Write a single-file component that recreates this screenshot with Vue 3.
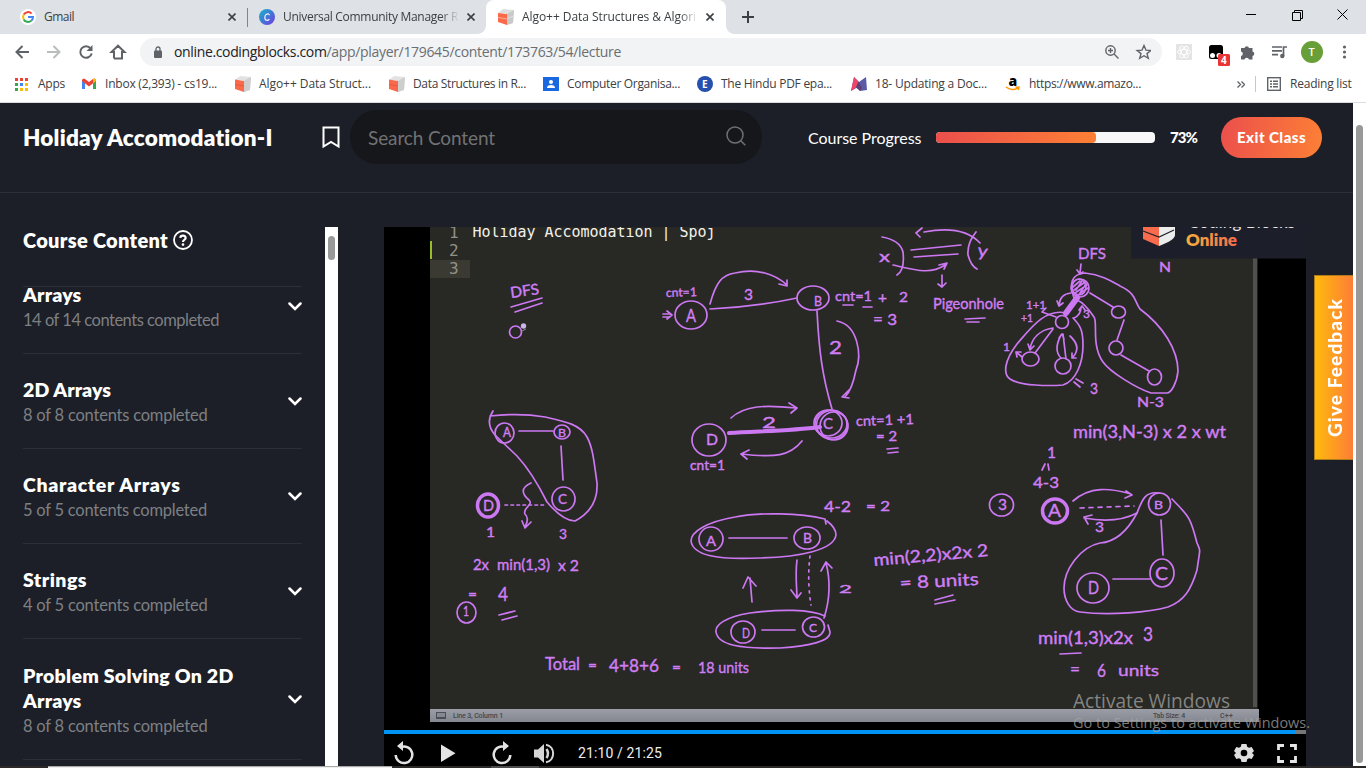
<script setup>
// Stretches or tightens letter spacing so a label fills its intended length.
const vFit = {
  mounted(el, { value, modifiers }) {
    const range = document.createRange()
    range.selectNodeContents(el)
    const box = range.getBoundingClientRect()
    const length = modifiers.vertical ? box.height : box.width
    el.style.letterSpacing = (value - length) / el.textContent.length + 'px'
  },
}

const bookmarks = [
  { icon: 'apps', text: 'Apps', w: 27 },
  { icon: 'gmail', text: 'Inbox (2,393) - cs19...', w: 112 },
  { icon: 'blocks', text: 'Algo++ Data Struct...', w: 112 },
  { icon: 'blocks', text: 'Data Structures in R...', w: 113 },
  { icon: 'people', text: 'Computer Organisa...', w: 113 },
  { icon: 'e', text: 'The Hindu PDF epa...', w: 111 },
  { icon: 'm', text: '18- Updating a Doc...', w: 112 },
  { icon: 'amazon', text: 'https://www.amazo...', w: 112 },
]

const sections = [
  { lines: [['Arrays', 58.5]], sub: '14 of 14 contents completed', w: 196 },
  { lines: [['2D Arrays', 88]], sub: '8 of 8 contents completed', w: 184.5 },
  { lines: [['Character Arrays', 157.5]], sub: '5 of 5 contents completed', w: 184 },
  { lines: [['Strings', 64]], sub: '4 of 5 contents completed', w: 184.5 },
  { lines: [['Problem Solving On 2D', 210.5], ['Arrays', 58.5]], sub: '8 of 8 contents completed', w: 184.5 },
]

// Whiteboard captions: [x, baseline, width, font size, text, rotation]
const notes = [
  [511, 298, 29, 15, 'DFS', -8],
  [666, 297, 31, 12, 'cnt=1', -2],
  [686, 322, 10, 17, 'A'],
  [744, 300, 9, 16, '3'],
  [814, 306, 8, 14, 'B'],
  [829, 354, 13, 18, '2'],
  [835, 301, 37, 14, 'cnt=1'],
  [878, 303, 9, 15, '+'],
  [899, 302, 9, 14, '2'],
  [873, 325, 24, 15, '= 3'],
  [933, 309, 71, 16, 'Pigeonhole'],
  [879, 262, 11, 15, 'x'],
  [977, 256, 10, 17, 'y', 8],
  [856, 426, 58, 14, 'cnt=1 +1', -2],
  [876, 441, 21, 13, '= 2'],
  [706, 445, 12, 16, 'D'],
  [690, 470, 35, 13, 'cnt=1'],
  [762, 428, 14, 15, '2'],
  [823, 429, 10, 15, 'C'],
  [503, 437, 8, 13, 'A'],
  [558, 437, 8, 12, 'B'],
  [558, 504, 9, 13, 'C'],
  [483, 511, 11, 15, 'D'],
  [486, 537, 9, 14, '1'],
  [559, 539, 8, 13, '3'],
  [473, 570, 16, 15, '2x'],
  [497, 570, 53, 15, 'min(1,3)'],
  [558, 571, 21, 15, 'x 2'],
  [468, 599, 9, 14, '='],
  [498, 601, 10, 20, '4'],
  [463, 616, 6, 13, '1'],
  [545, 670, 35, 17, 'Total'],
  [588, 670, 9, 14, '='],
  [609, 672, 50, 17, '4+8+6'],
  [672, 672, 9, 14, '='],
  [698, 673, 51, 16, '18 units'],
  [706, 546, 10, 14, 'A'],
  [803, 543, 9, 14, 'B'],
  [824, 512, 27, 15, '4-2'],
  [866, 511, 24, 13, '= 2'],
  [874, 566, 115, 17, 'min(2,2)x2x 2', -5],
  [900, 589, 79, 17, '= 8 units', -3],
  [839, 593, 13, 12, '2'],
  [742, 638, 8, 13, 'D'],
  [809, 632, 8, 12, 'C'],
  [998, 510, 9, 15, '3'],
  [1048, 517, 13, 17, 'A'],
  [1095, 532, 9, 13, '3'],
  [1154, 509, 9, 12, 'B'],
  [1155, 580, 13, 18, 'C'],
  [1088, 594, 11, 18, 'D'],
  [1047, 458, 9, 16, '1'],
  [1033, 488, 26, 15, '4-3'],
  [1038, 644, 95, 17, 'min(1,3)x2x'],
  [1143, 641, 10, 20, '3'],
  [1070, 675, 10, 15, '='],
  [1097, 677, 9, 18, '6'],
  [1118, 676, 41, 16, 'units'],
  [1078, 259, 28, 15, 'DFS'],
  [1159, 272, 12, 13, 'N'],
  [1026, 309, 20, 12, '1+1'],
  [1021, 322, 12, 12, '+1'],
  [1003, 351, 7, 12, '1'],
  [1083, 318, 7, 11, '3'],
  [1090, 394, 8, 15, '3'],
  [1137, 407, 27, 13, 'N-3'],
  [1073, 438, 153, 17, 'min(3,N-3) x 2 x wt'],
]

const strokes = [
  'M511 307L542 298M515 312L542 303',
  'M710 304C716 282 722 275 735 273C757 268 775 274 787 285M779 284L787 286L787 280',
  'M710 309Q755 307 797 298M817 311C819 350 822 375 832 409',
  'M837 321C858 325 862 355 856 370C853 385 850 392 845 397M849 390L842 397L849 398',
  'M663 314H669M663 317H669M667 311L672 315L667 319',
  'M843 305H853M863 307H872M965 319L985 318M967 322L979 322',
  'M942 275V287M938 284L942 287L946 283',
  'M882 237Q900 240 903 252Q905 270 897 275',
  'M893 265C915 270 930 275 945 265M939 265L947 263L944 269',
  'M924 232C950 227 968 230 980 243M922 228L916 233L920 237',
  'M911 250L961 245M914 257L958 254M976 232Q967 243 968 255Q971 266 977 269',
  'M887 449L898 448M888 453L898 452',
  'M731 418C745 405 765 405 796 408M789 403L797 408L791 413',
  'M802 441C790 456 775 458 742 454M749 450L741 454L747 459',
  'M519 431H553M561 446L563 480',
  'M493 411C487 420 489 428 495 435L517 456C530 470 538 484 547 502C558 515 567 521 575 521C590 513 598 500 597 483C594 462 593 448 587 437C580 424 563 421 545 417C528 414 508 414 490 416',
  'M531 483C520 488 522 494 529 500C534 505 522 508 525 514C530 519 526 525 525 527M522 521L525 528L531 522',
  'M499 615L515 611M502 620L517 616',
  'M826 524L825 519C800 513 760 512 735 517C706 522 691 532 691 541C693 555 715 560 760 558C800 557 834 550 836 535C836 528 831 524 827 521',
  'M729 538H787M762 630H795',
  'M752 602L750 578M743 588L748 577L756 586',
  'M797 560C795 575 797 590 797 598M791 590L797 598L801 593',
  'M824 618Q833 590 826 563M821 571L826 562L832 568',
  'M825 616C810 609 780 609 750 613C725 617 715 625 716 632C718 645 740 649 780 648C810 646 831 641 830 632L828 625',
  'M935 600L953 595M935 604L955 600',
  'M1073 501C1090 486 1110 488 1131 494M1126 491L1132 495L1125 498',
  'M1137 513C1120 522 1100 521 1084 518M1092 515L1084 517L1088 524',
  'M1161 520L1163 555M1113 579H1150M1060 654L1081 653',
  'M1159 493C1145 491 1142 500 1137 513C1127 532 1115 542 1100 543C1080 547 1064 570 1064 588C1064 600 1070 611 1080 612C1110 616 1150 612 1168 607C1184 601 1191 590 1197 570C1200 548 1201 552 1197 543C1190 515 1188 516 1172 499',
  'M1045 464L1042 470M1048 464L1049 470',
  'M1081 264L1080 273M1077 270L1080 274L1083 272',
  'M1066 313C1045 308 1030 329 1017 344C1004 361 1003 374 1010 379C1020 386 1050 386 1063 385C1076 381 1083 363 1083 345C1083 330 1080 325 1073 318',
  'M1053 328C1040 330 1032 338 1030 349M1028 344L1030 350L1034 346M1053 329L1035 353',
  'M1063 334L1066 359M1061 335Q1053 350 1061 358M1070 336Q1082 347 1073 357M1059 338L1062 334L1064 339M1076 358L1072 358L1072 353',
  'M1022 357L1016 352M1017 357L1016 352L1021 352M1071 293Q1060 294 1059 305M1057 301L1059 306L1063 303M1074 318Q1081 315 1081 307M1079 310L1082 306L1085 310',
  'M1042 312L1056 317M1042 312L1046 308M1074 382L1080 387M1076 379L1083 383',
  'M1074 298C1069 284 1071 274 1085 273C1103 275 1113 282 1120 286C1137 294 1134 301 1140 309C1163 326 1178 350 1178 371C1177 383 1171 393 1167 393L1151 393C1136 388 1110 372 1103 362C1091 345 1098 322 1094 317C1088 308 1082 302 1077 300',
  'M1090 293L1113 307M1124 320L1117 340M1121 355L1149 371',
  'M1073 287L1080 281M1074 290L1085 282M1075 293L1087 285M1078 295L1088 288M1082 281L1076 290M1086 284L1080 293',
]

const rings = [
  [515.5, 332, 6, 6], [691, 315, 16, 14], [813, 298, 16, 12], [709, 440, 17, 16],
  [831, 424, 16, 14], [834, 426, 14, 14], [828, 423, 14, 13], [832, 425, 15.5, 14.5],
  [504.5, 433, 9.5, 10], [562, 432, 8, 7], [563.5, 499, 11.5, 12], [466.5, 612.5, 9.5, 10.5],
  [711, 539, 12, 12], [807, 538, 13, 11], [743, 632, 12, 11], [813.5, 627, 11, 10],
  [1001.5, 505, 12, 11], [1159.5, 504, 11, 11], [1162, 573, 12, 14], [1093, 588, 16, 15],
  [1080, 288, 9, 9], [1079, 287, 7, 8], [1062, 322, 6.5, 6.5], [1030.5, 359, 8.5, 7], [1063, 366, 8, 8],
  [1118.5, 312, 7, 6], [1116, 348, 7, 7], [1154.5, 377, 7, 8],
]
</script>

<template>
  <div class="window">
    <div class="tabs">
      <div class="tab first">
        <svg class="fav" viewBox="0 0 16 16"><circle cx="8" cy="8" r="8" fill="#fff" /><g fill="none" stroke-width="2"><path d="M11.6 4.6A5 5 0 0 0 3.7 5.6" stroke="#ea4335" /><path d="M3.7 5.6A5 5 0 0 0 3.7 10.4" stroke="#fbbc05" /><path d="M3.7 10.4A5 5 0 0 0 11.2 11.8" stroke="#34a853" /><path d="M11.2 11.8A5 5 0 0 0 13 8H8" stroke="#4285f4" /></g></svg>
        <span v-fit="30" class="tab-text">Gmail</span>
        <svg class="close" viewBox="0 0 8 8"><path d="M.5.5L7.5 7.5M7.5.5L.5 7.5" /></svg>
      </div>
      <div class="tab second">
        <svg class="fav" viewBox="0 0 16 16"><defs><linearGradient id="cv" x1="0" y1="0" x2="1" y2="1"><stop stop-color="#12b7cb" /><stop offset="1" stop-color="#7338e0" /></linearGradient></defs><circle cx="8" cy="8" r="8" fill="url(#cv)" /><path d="M10.3 6.2C10 4 6 4.4 5.8 8.3C5.7 12 9.3 12 10.4 10" fill="none" stroke="#fff" stroke-width="1.1" /></svg>
        <span class="tab-text clipped"><span v-fit="175">Universal Community Manager R</span></span>
        <svg class="close" viewBox="0 0 8 8"><path d="M.5.5L7.5 7.5M7.5.5L.5 7.5" /></svg>
      </div>
      <div class="tab active">
        <svg class="fav" viewBox="0 0 16 16"><path d="M0 4L5 0L16 1L15 14L8 16V4Z" fill="#dedede" /><path d="M0 4L9 5V16L0 13Z" fill="#f9694a" /><path d="M9 5L16 1L15 14L9 16Z" fill="#c9c9c9" /><path d="M9 9.5L15.5 7M0 8.5L9 10" stroke="#f5f5f5" stroke-width=".5" /></svg>
        <span class="tab-text clipped"><span v-fit="174">Algo++ Data Structures &amp; Algori</span></span>
        <svg class="close" viewBox="0 0 8 8"><path d="M.5.5L7.5 7.5M7.5.5L.5 7.5" /></svg>
      </div>
      <svg class="plus" viewBox="0 0 12 12"><path d="M6 0V12M0 6H12" stroke="#3c4043" stroke-width="2" /></svg>
      <svg class="winbtns" viewBox="0 0 104 12" fill="none" stroke="#000"><path d="M1 5.5H11M47.5 3.5H55.500V11.500H47.500V3.500ZM49.500 3V1.500H57.500V9.500H56M92.500 .500L102.500 10.500M102.500 .500L92.500 10.500" /></svg>
    </div>

    <div class="toolbar">
      <svg class="nav" viewBox="0 0 116 16" fill="none" stroke-width="2"><path d="M14 8H1.5M7.5 2L1.5 8L7.5 14" stroke="#5f6368" /><path d="M32 8H44.5M38.5 2L44.5 8L38.5 14" stroke="#babcbe" /><path d="M75.6 4.3A5.8 5.8 0 1 0 76.7 9.5" stroke="#5f6368" /><path d="M77.5 1V7H71.5Z" fill="#5f6368" /><path d="M99 14.5H106.7M99 14.5V8H96.5L103 1.7L109.5 8H107V14.5H99" stroke="#5f6368" /></svg>
      <div class="omni">
        <svg class="lock" viewBox="0 0 8 12"><path d="M2 5V3A2 2 0 0 1 6 3V5" fill="none" stroke="#5f6368" stroke-width="1.3" /><rect y="4.5" width="8" height="7.5" rx="1" fill="#5f6368" /></svg>
        <span v-fit="152.5" class="host">online.codingblocks.com</span><span v-fit="294.5" class="path">/app/player/179645/content/173763/54/lecture</span>
        <svg class="omni-icons" viewBox="0 0 46 16" fill="none" stroke="#5f6368" stroke-width="1.4"><circle cx="5.500" cy="6.500" r="4.700" /><path d="M9 10L13.500 14.500M5.500 4V9M3 6.500H8" /><path d="M39 1.500L41 6.200L45.800 6.500L42 9.600L43.300 14.300L39 11.700L34.700 14.300L36 9.600L32.200 6.500L37 6.200Z" /></svg>
      </div>
      <svg class="ext" viewBox="0 0 190 28">
        <rect x="4" y="6" width="16" height="16" fill="#e4e4e4" /><g fill="none" stroke="#fff" stroke-width=".9"><ellipse cx="12" cy="14" rx="6.5" ry="2.5" /><ellipse cx="12" cy="14" rx="6.5" ry="2.5" transform="rotate(60 12 14)" /><ellipse cx="12" cy="14" rx="6.5" ry="2.5" transform="rotate(120 12 14)" /></g>
        <rect x="37" y="7" width="14" height="14" rx="2.5" fill="#000" /><circle cx="40.500" cy="17.500" r="2.500" fill="#fff" /><circle cx="47" cy="17.500" r="2.500" fill="#fff" /><rect x="46" y="16" width="12" height="12" rx="1.500" fill="#eb3434" /><text x="49" y="25.800" class="badge">4</text>
        <path d="M69 10H72.500A2.300 2.300 0 0 1 77 10H80.500V13.500A2.300 2.300 0 0 1 80.500 18V21.500H77A2.300 2.300 0 0 0 72.500 21.500H69V18A2.300 2.300 0 0 0 69 13.500Z" fill="#5f6368" />
        <path d="M100 9H110M100 12.800H110M100 16.600H106M115 9H111.500V18" fill="none" stroke="#5f6368" stroke-width="1.700" /><circle cx="110.300" cy="18" r="2.200" fill="#5f6368" />
        <circle cx="140" cy="14" r="11" fill="#689f38" /><text x="136.500" y="18" class="avatar">T</text>
        <g fill="#5f6368"><circle cx="172.500" cy="9" r="1.600" /><circle cx="172.500" cy="14" r="1.600" /><circle cx="172.500" cy="19" r="1.600" /></g>
      </svg>
    </div>

    <div class="bookmarks">
      <div v-for="b in bookmarks" :key="b.text" class="bm" :class="'bm-' + b.icon">
        <svg v-if="b.icon === 'apps'" viewBox="0 0 16 16"><path d="M1 2H4V5H1ZM6 2H9V5H6ZM11 2H14V5H11Z" fill="#ea4335" /><path d="M1 7H4V10H1ZM1 12H4V15H1Z" fill="#34a853" /><path d="M6 7H9V10H6Z" fill="#4285f4" /><path d="M11 7H14V10H11ZM6 12H9V15H6ZM11 12H14V15H11Z" fill="#fbbc05" /></svg>
        <svg v-else-if="b.icon === 'gmail'" viewBox="0 0 16 16"><path d="M0 4V13H3V7Z" fill="#4285f4" /><path d="M14 4V13H11V7Z" fill="#34a853" /><path d="M0 4Q1 1.500 3 3L7 6L11 3Q13 1.500 14 4V5L7 10.500L0 5Z" fill="#ea4335" /><path d="M11 3Q14 1.500 14 5L11 7.300Z" fill="#fbbc05" /></svg>
        <svg v-else-if="b.icon === 'blocks'" viewBox="0 0 16 16"><path d="M0 4L5 0L16 1L15 14L8 16V4Z" fill="#e2e2e2" /><path d="M0 3.500L9 5V16L0 13Z" fill="#f9694a" /><path d="M9 5L16 1L15 14L9 16Z" fill="#cecece" /><path d="M0 8.500L9 10" stroke="#d54b32" stroke-width=".5" /></svg>
        <svg v-else-if="b.icon === 'people'" viewBox="0 0 16 16"><path d="M0 1H16V15H0Z" fill="#1a67e0" /><circle cx="8" cy="6" r="2" fill="#fff" /><path d="M4 12Q4 9 8 9T12 12Z" fill="#fff" /></svg>
        <svg v-else-if="b.icon === 'e'" viewBox="0 0 16 16"><circle cx="8" cy="8" r="8" fill="#264fae" /><text x="5" y="11.700" class="e-mark">E</text></svg>
        <svg v-else-if="b.icon === 'm'" viewBox="0 0 16 16"><path d="M3 1L8 6L15 1L16 14L9 15L7 11L0 15Z" fill="#5b5ba8" /><path d="M3 1L7.500 5.500L5 11.500L0 15Z" fill="#f0436a" /><path d="M7.500 5.500L11 12L9 15L5 11.500Z" fill="#5e3f74" /></svg>
        <svg v-else viewBox="0 0 16 16"><text x="3.500" y="9.500" class="a-mark">a</text><path d="M1 11Q7 15.500 13 11.800M10.500 11.200L14 11L13.300 14" fill="none" stroke="#f90" stroke-width="1.500" /></svg>
        <span v-fit="b.w">{{ b.text }}</span>
      </div>
      <svg class="chev2" viewBox="0 0 8 7" fill="none" stroke="#5f6368" stroke-width="1.4"><path d="M.5.5L3.5 3.5L.5 6.5M4.5.5L7.5 3.5L4.5 6.5" /></svg>
      <i class="bm-sep"></i>
      <svg class="list-icon" viewBox="0 0 14 14" fill="none" stroke="#5f6368"><rect x=".7" y=".7" width="12.600" height="12.600" stroke-width="1.400" /><path d="M3 4.300H5M6 4.300H11M3 7H5M6 7H11M3 9.700H5M6 9.700H11" stroke-width="1.500" /></svg>
      <span v-fit="61.5">Reading list</span>
    </div>

    <div class="page">
      <div class="main">
        <header>
          <h1><span v-fit="250">Holiday Accomodation-I</span></h1>
          <svg class="mark" viewBox="0 0 18 23"><path d="M1.500 1.500H16.500V20.500L9 16L1.500 20.500Z" fill="none" stroke="#fff" stroke-width="2" /></svg>
          <div class="search">
            <span v-fit="127">Search Content</span>
            <svg viewBox="0 0 20 20" fill="none" stroke="#6f7072" stroke-width="1.500"><circle cx="9" cy="9" r="8" /><path d="M14.500 14.500L19.300 19.300" /></svg>
          </div>
          <span v-fit="113.5" class="progress-label">Course Progress</span>
          <div class="bar"><i></i></div>
          <b v-fit="27" class="pct">73%</b>
          <button><span v-fit="69">Exit Class</span></button>
        </header>

        <div class="content">
          <aside>
            <div class="side-head">
              <span v-fit="145">Course Content</span>
              <svg viewBox="0 0 20 20"><circle cx="10" cy="10" r="9" fill="none" stroke="#fff" stroke-width="1.800" /><path d="M7.300 7.800C7.600 4.700 13 5.100 12.600 8.100C12.400 9.700 10 10 10 12" fill="none" stroke="#fff" stroke-width="2.200" /><circle cx="10" cy="14.600" r="1.300" fill="#fff" /></svg>
            </div>
            <div class="list">
              <div v-for="s in sections" :key="s.lines[0][0]" class="row">
                <div class="copy">
                  <h3 v-for="l in s.lines" :key="l[0]"><span v-fit="l[1]">{{ l[0] }}</span></h3>
                  <p><span v-fit="s.w">{{ s.sub }}</span></p>
                </div>
                <svg viewBox="0 0 14 9"><path d="M1.500 1.500L7 7L12.500 1.500" fill="none" stroke="#fff" stroke-width="2.500" stroke-linecap="round" /></svg>
              </div>
            </div>
          </aside>
          <div class="side-scroll"><i></i></div>

          <div class="video">
            <div class="screen">
              <svg class="board" viewBox="430 227 876 483">
                <rect x="430" y="227" width="829" height="483" fill="#282824" />
                <rect x="430" y="260" width="40" height="18" fill="#3b3a32" />
                <rect x="430" y="241" width="2" height="18" fill="#99bd26" />
                <rect x="1253" y="227" width="4.500" height="480" fill="#50504d" />
                <rect x="1257.500" y="227" width="2" height="483" fill="#000" />
                <g class="code">
                  <text x="449" y="237.500" class="ln">1</text><text x="449" y="256" class="ln">2</text><text x="449" y="274" class="ln">3</text>
                  <text x="472.500" y="237" textLength="243">Holiday Accomodation | Spoj</text>
                </g>
                <g class="ink">
                  <path v-for="(d, i) in strokes" :key="i" :d="d" />
                  <ellipse v-for="(r, i) in rings" :key="'r' + i" :cx="r[0]" :cy="r[1]" :rx="r[2]" :ry="r[3]" />
                  <ellipse cx="488" cy="505.500" rx="10.500" ry="11.500" stroke-width="3.500" />
                  <ellipse cx="1055" cy="511" rx="12.500" ry="12" stroke-width="3.500" />
                  <path d="M729 433C760 431 790 431 820 427" stroke-width="4" />
                  <path d="M1077 298L1066 313" stroke-width="6" />
                  <path d="M505 505H546" stroke-dasharray="2.500 3.500" />
                  <path d="M810 556Q807 580 811 605" stroke-dasharray="2 5" />
                  <path d="M1080 508L1134 506" stroke-dasharray="4 5" />
                </g>
                <circle cx="523.500" cy="326" r="2.700" fill="#c8b6e6" /><path d="M522 331L526 329" stroke="#888" />
                <g class="hand">
                  <text v-for="(n, i) in notes" :key="i" :x="n[0]" :y="n[1]" :font-size="n[3]" :textLength="n[2]" lengthAdjust="spacingAndGlyphs" :transform="n[5] ? `rotate(${n[5]} ${n[0]} ${n[1]})` : undefined">{{ n[4] }}</text>
                </g>
                <rect x="1131" y="227" width="175" height="31.500" fill="#1c1f2a" />
                <path d="M1143 227H1159V246L1143 239Z" fill="#f96b4d" /><path d="M1159 227H1175V235Q1175 240 1159 246Z" fill="#ececec" /><path d="M1143 231L1159 237L1174 230" fill="none" stroke="#22232b" stroke-width="1.200" />
                <defs><linearGradient id="on"><stop stop-color="#f6b03c" /><stop offset="1" stop-color="#f36b4f" /></linearGradient></defs>
                <text x="1188" y="227.800" textLength="107" class="brand" fill="#e8e8ea">Coding Blocks</text>
                <text x="1186" y="245.500" textLength="51" class="brand bold" fill="url(#on)">Online</text>
              </svg>
              <div class="status">
                <svg viewBox="0 0 10 7"><rect x=".5" y=".5" width="9" height="6" fill="#858891" stroke="#4c4e55" /><path d="M1 5.500H9" stroke="#4c4e55" /></svg>
                <span v-fit="50">Line 3, Column 1</span><span v-fit="32" class="tabsize">Tab Size: 4</span><span v-fit="13">C++</span>
              </div>
            </div>
            <div class="seek"><i></i></div>
            <div class="controls">
              <svg viewBox="0 0 180 28" class="left-c">
                <g fill="none" stroke="#e3e3e3" stroke-width="2.500"><path d="M17 8A8.300 8.300 0 1 1 11.700 16" /><path d="M121 8A8.300 8.300 0 1 0 126.300 16" /></g>
                <path d="M19 2V12L13 7ZM119 2V12L125 7ZM57 5.500V23L71.500 14.200Z" fill="#e3e3e3" />
                <path d="M150 10.500H154L160 5V24L154 18.500H150Z" fill="#d6d6d6" /><path d="M162.500 10Q165.500 14.500 162.500 19" fill="none" stroke="#d6d6d6" stroke-width="2.500" /><path d="M162 5.700C171.500 7.500 171.500 21.500 162 23.300" fill="none" stroke="#d6d6d6" stroke-width="2" />
              </svg>
              <span v-fit="84" class="time">21:10 / 21:25</span>
              <svg viewBox="0 0 64 20" class="right-c">
                <path d="M7.500 1H12.500L13.200 3.700L15 4.700L17.700 3.900L20 8L18 10L20 12L17.700 16.100L15 15.300L13.200 16.300L12.500 19H7.500L6.800 16.300L5 15.300L2.300 16.100L0 12L2 10L0 8L2.300 3.900L5 4.700L6.800 3.700Z" transform="translate(1)" fill="#dedede" /><circle cx="11" cy="10" r="3.300" fill="#000" />
                <path d="M45.500 7V2.500H51M57 2.500H62.500V7M62.500 13V18.500H57M51 18.500H45.500V13" fill="none" stroke="#e5e5e5" stroke-width="2.800" />
              </svg>
            </div>
          </div>
          <div class="feedback"><span v-fit.vertical="139">Give Feedback</span></div>
        </div>
      </div>
      <div class="page-scroll"><i></i></div>
    </div>
    <div class="bottom-edge"><i></i><b></b></div>

    <svg class="watermark" viewBox="0 0 240 44">
      <text x="0" y="19.500" font-size="20" textLength="157" lengthAdjust="spacingAndGlyphs">Activate Windows</text>
      <text x="0" y="40" font-size="15" textLength="237" lengthAdjust="spacingAndGlyphs">Go to Settings to activate Windows.</text>
    </svg>
  </div>
</template>

<style>
html, body { margin: 0; overflow: hidden; background: #fff; }
</style>

<style scoped>
* { box-sizing: border-box; }
svg { display: block; flex: none; }
span, b { white-space: nowrap; }
.window { position: relative; width: 1366px; height: 768px; overflow: hidden; display: flex; flex-direction: column; font-family: "Open Sans", "Noto Sans", sans-serif; font-size: 12px; color: #3c4043; }

.tabs { height: 34px; flex: none; display: flex; background: #dee1e6; }
.tab { display: flex; align-items: center; height: 34px; }
.tab.first { width: 248px; padding-left: 20px; background: linear-gradient(#80868b, #80868b) right 8px / 1px 19px no-repeat; }
.tab.second { width: 238px; padding-left: 11px; }
.tab.active { position: relative; width: 240px; padding-left: 12px; background: #fff; border-radius: 8px 8px 0 0; }
.tab.active::before, .tab.active::after { content: ""; position: absolute; bottom: 0; width: 8px; height: 8px; }
.tab.active::before { left: -8px; background: radial-gradient(circle at 0 0, transparent 7.5px, #fff 8px); }
.tab.active::after { right: -8px; background: radial-gradient(circle at 100% 0, transparent 7.5px, #fff 8px); }
.fav { width: 16px; height: 16px; margin-right: 8px; }
.tab-text { flex: none; margin-top: -1px; }
.clipped { width: 176px; overflow: hidden; -webkit-mask-image: linear-gradient(90deg, #000 158px, transparent 176px); }
.close { width: 8px; height: 8px; margin-left: 8px; fill: none; stroke: #3c4043; stroke-width: 1.6; }
.first .close { margin-left: auto; margin-right: 12px; }
.plus { width: 12px; height: 12px; margin: 11px 0 0 16px; }
.winbtns { width: 104px; height: 12px; margin: 9px 17px 0 auto; }

.toolbar { height: 33px; flex: none; display: flex; padding-top: 4px; }
.nav { width: 116px; height: 16px; margin: 6px 9px 0 15px; }
.omni { width: 1022px; height: 28px; border-radius: 14px; background: #f1f3f4; display: flex; align-items: center; font-size: 14px; }
.omni span { margin-top: -2px; }
.lock { width: 8px; height: 12px; margin: 0 12px 0 14px; }
.host { color: #202124; }
.path { color: #6a6e73; }
.omni-icons { width: 46px; height: 16px; margin: 0 11px 0 auto; }
.ext { width: 190px; height: 28px; margin-left: 10px; }
.badge { font: bold 10px "Open Sans", sans-serif; fill: #fff; }
.avatar { font: 600 11px "Open Sans", sans-serif; fill: #fff; }

.bookmarks { height: 36px; flex: none; display: flex; align-items: center; padding: 0 0 1px 14px; border-bottom: 1px solid #dadce0; font-size: 12px; }
.bookmarks span { margin-top: -1px; }
.bm { width: 154px; flex: none; display: flex; align-items: center; }
.bm svg { width: 16px; height: 16px; margin-right: 8px; }
.bm-apps { width: 68px; }
.bm-gmail { width: 153px; }
.bm-gmail svg { margin-right: 7px; }
.e-mark { font: bold 10px "Open Sans", sans-serif; fill: #fff; }
.a-mark { font: 900 14px "Open Sans", sans-serif; fill: #000; }
.chev2 { width: 8px; height: 7px; margin-left: 78px; }
.bm-sep { width: 1px; height: 16px; margin: 0 11px 0 10px; background: #c6c9cc; }
.list-icon { width: 14px; height: 14px; margin-right: 9px; }

.page { flex: 1; min-height: 0; display: flex; background: #1c1f27; font-family: Lato, sans-serif; color: #fff; }
.main { width: 1353px; display: flex; flex-direction: column; }
.page-scroll { width: 13px; background: #fff; padding: 22px 0 0 3px; }
.page-scroll i { display: block; width: 7px; height: 638px; border-radius: 4px; background: #999; }
header { height: 90px; flex: none; display: flex; align-items: center; padding: 0 31px 21px 23px; border-bottom: 1px solid #2c2f37; }
h1 { margin: 2px 0 0; width: 299px; font-size: 22.5px; font-weight: 800; line-height: 30px; }
.mark { width: 18px; height: 23px; margin-right: 10px; }
.search { width: 412px; height: 54px; border-radius: 27px; background: #16171b; display: flex; align-items: center; justify-content: space-between; padding: 0 16px 0 18px; font-size: 19px; color: #717274; }
.search svg { width: 20px; height: 20px; margin-top: -2px; }
.progress-label { width: 114px; margin-left: 46px; font-size: 16px; }
.bar { width: 219px; height: 11px; margin-left: 14px; border-radius: 4px; background: #f8f8f8; }
.bar i { display: block; width: 73%; height: 11px; border-radius: 4px; background: linear-gradient(90deg, #eb4f4c, #fd8035); }
.pct { width: 27px; margin-left: 15px; font-size: 15px; font-weight: 900; }
button { width: 101px; height: 41px; margin-left: 24px; padding: 0; border: 0; border-radius: 21px; background: linear-gradient(100deg, #eb4f4c, #fd8035); color: #fff; font: 900 15px Lato, sans-serif; }

.content { flex: 1; min-height: 0; display: flex; padding-top: 34px; }
aside { width: 325px; padding: 0 23px; overflow: hidden; }
.side-head { height: 60px; display: flex; padding-top: 1px; border-bottom: 1px solid #2c2f37; font-size: 20px; font-weight: 800; line-height: 24px; width: 279px; }
.side-head svg { width: 20px; height: 20px; margin: 2px 0 0 5px; }
.list { margin-top: -3px; width: 279px; }
.row { display: flex; align-items: center; justify-content: space-between; padding: 25px 0 20px; border-bottom: 1px solid #2c2f37; }
.row:first-child { padding-top: 0; }
.row:last-child { padding-top: 26px; }
.row svg { width: 14px; height: 9px; margin-top: -5px; }
.copy { margin: -2px 0 2px; }
h3 { margin: 0; font-size: 19.5px; font-weight: 800; line-height: 25px; }
p { margin: 0; font-size: 16.5px; line-height: 24px; color: #7e8083; }
p span { position: relative; top: 1px; }
.side-scroll { width: 13px; background: #fff; padding: 9px 3px; }
.side-scroll i { display: block; width: 7px; height: 24px; border-radius: 4px; background: #999; }
.video { width: 922px; margin-left: 46px; background: #000; display: flex; flex-direction: column; }
.screen { height: 503px; flex: none; padding-left: 46px; }
.board { width: 876px; height: 483px; }
.status { position: relative; width: 829px; height: 13px; margin-top: -1px; padding: 0 26px 0 6px; display: flex; align-items: center; background: linear-gradient(#9a9da6, #858891); color: #45474e; font-family: Roboto, sans-serif; font-size: 7px; font-weight: 500; }
.status svg { width: 10px; height: 7px; margin-right: 7px; }
.tabsize { margin: 0 35px 0 auto; }
.code { font: 15px "DejaVu Sans Mono", monospace; fill: #f1f1ec; }
.ln { font-size: 16px; fill: #92928a; }
.ink { fill: none; stroke: #cb78f2; stroke-width: 1.7; stroke-linecap: round; stroke-linejoin: round; }
.hand { font-family: Lato, sans-serif; fill: #cf7ef5; stroke: #cf7ef5; stroke-width: .4; }
.brand { font: 400 17px Lato, sans-serif; }
.brand.bold { font-weight: 800; }
.seek { height: 4px; flex: none; background: #777; }
.seek i { display: block; width: 911px; height: 4px; background: #0095f5; }
.controls { display: flex; align-items: center; height: 34px; flex: none; padding: 4px 9px 0 0; }
.left-c { width: 180px; height: 28px; }
.time { margin-left: 14px; font-family: Roboto, sans-serif; font-size: 14px; color: #eee; }
.right-c { width: 64px; height: 20px; margin-left: auto; }
.feedback { width: 39px; height: 185px; margin: 48px 0 0 8px; display: flex; align-items: center; justify-content: center; background: linear-gradient(90deg, #ffb90c, #fd7e36); border: 1px solid #af7c19; border-right: 0; writing-mode: vertical-rl; }
.feedback span { transform: rotate(180deg); font-size: 19px; font-weight: 900; }
.bottom-edge { position: absolute; left: 0; right: 0; bottom: 0; height: 2px; display: flex; background: #2c2a29; }
.bottom-edge i { width: 344px; margin-left: 48px; background: #efefef; border-top: 1px solid #aaa; }
.bottom-edge b { width: 48px; margin-left: 99px; background: #4c4c4c; }
.watermark { position: absolute; left: 1073px; top: 688px; width: 240px; height: 44px; font-family: "Open Sans", sans-serif; fill: rgba(165, 165, 163, .75); }
</style>
